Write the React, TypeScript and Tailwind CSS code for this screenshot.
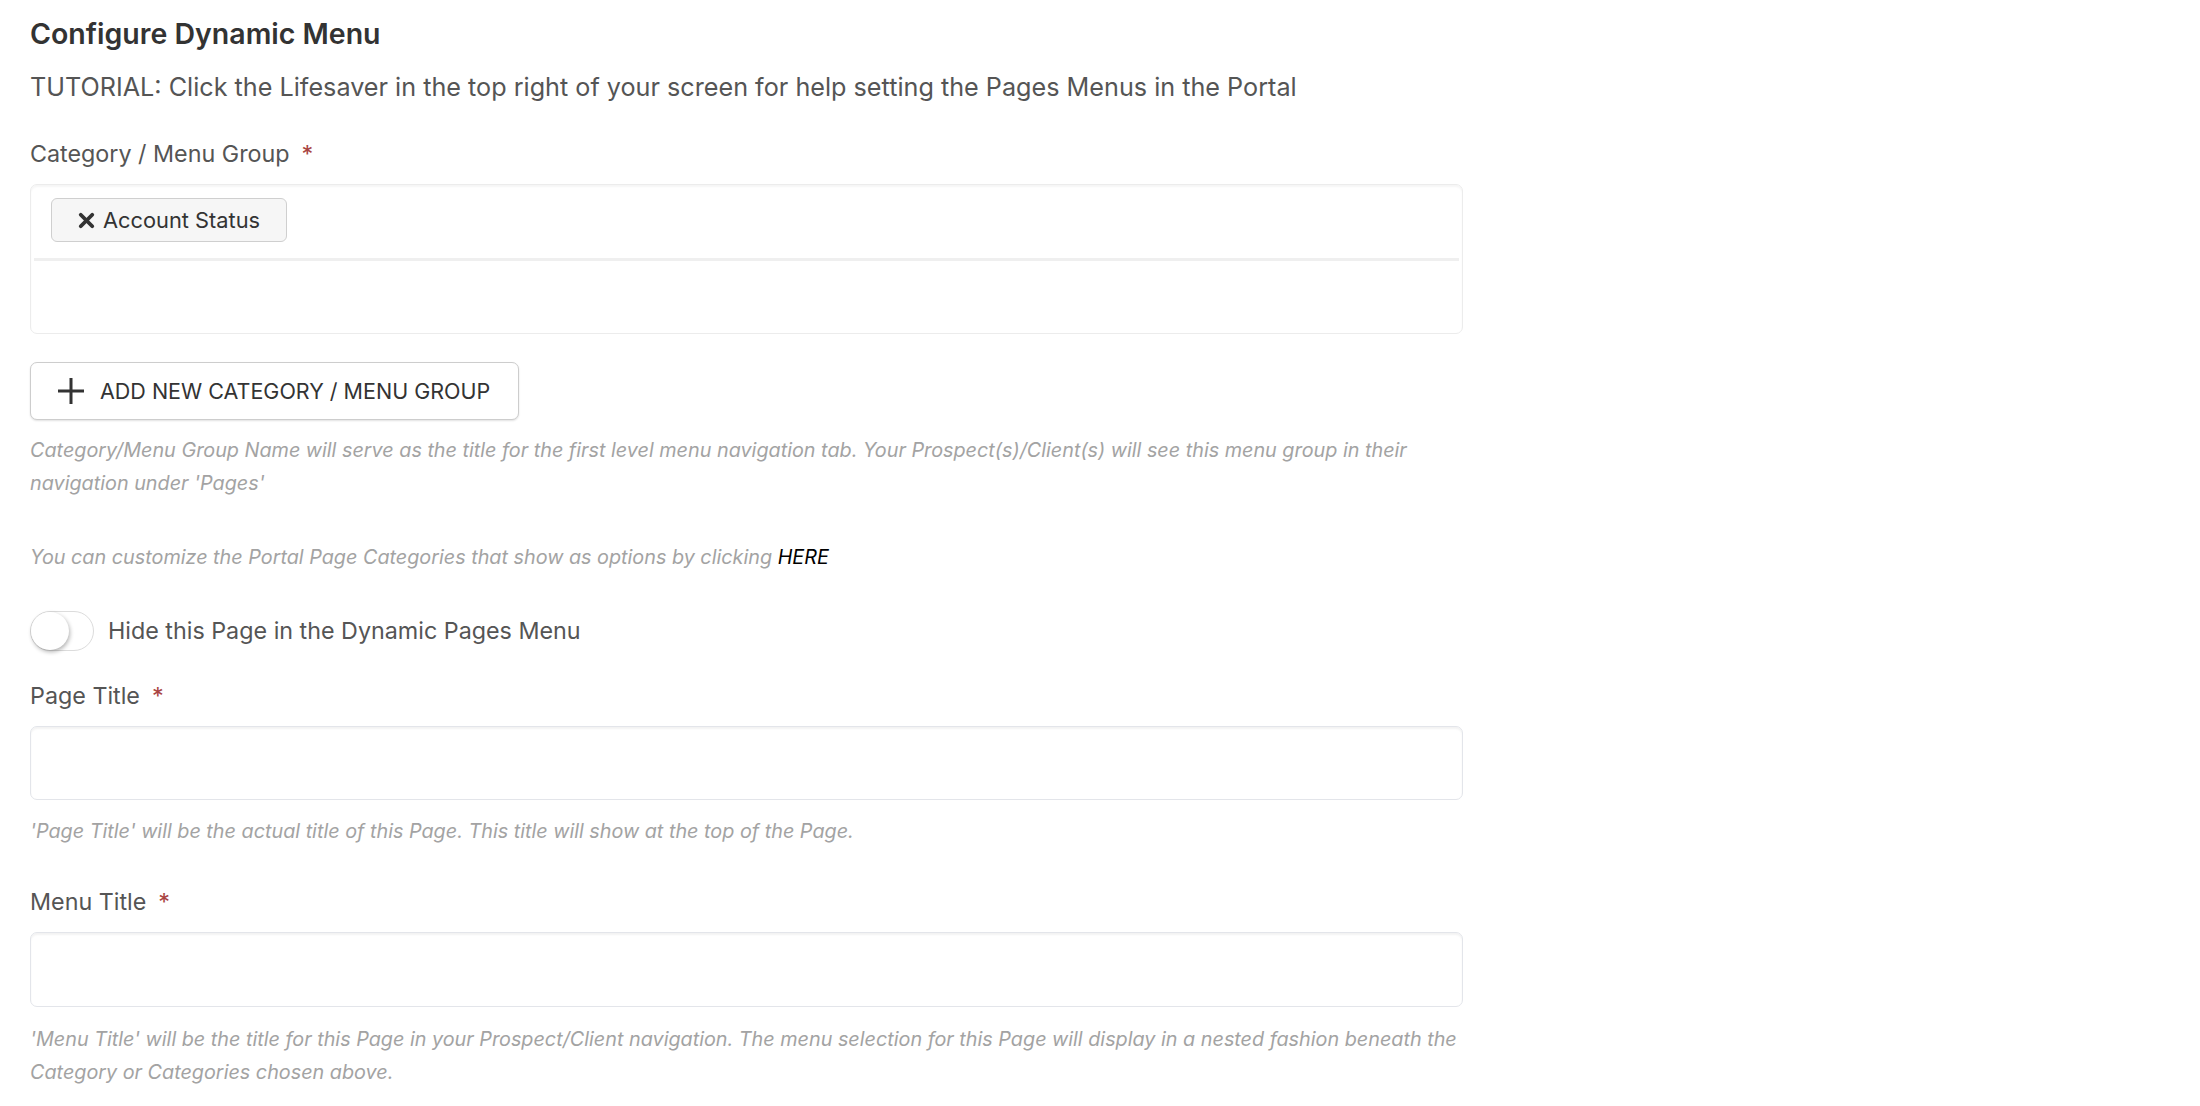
import { X } from "lucide-react";

const FONT = { fontFamily: "Inter, 'Noto Sans', 'Liberation Sans', sans-serif" };

function Req() {
  return <span className="ml-[12px] text-[#a94442]">*</span>;
}

function Help({ children, className = "" }: { children: React.ReactNode; className?: string }) {
  return (
    <p className={`text-[19.8px] leading-[33px] italic text-[#a3a3a3] ${className}`}>{children}</p>
  );
}

function TextInput({ className = "h-[74px]" }: { className?: string }) {
  return (
    <div className={`w-full rounded-[7px] border border-[#e3e5ea] bg-white shadow-[inset_0_2px_2px_rgba(0,0,0,0.05)] ${className}`} />
  );
}

function PlusIcon() {
  return (
    <svg width="28" height="28" viewBox="0 0 28 28" fill="none" stroke="#333" strokeWidth="3">
      <path d="M14 1v26M1 14h26" />
    </svg>
  );
}

export default function App() {
  return (
    <div className="min-h-screen bg-white text-[#555]" style={FONT}>
      <div className="w-[1463px] pl-[30px] pt-[16px]">
        <h1 className="text-[28.5px] leading-[36px] font-semibold text-[#333]">Configure Dynamic Menu</h1>
        <p className="mt-[19px] text-[25.2px] leading-[32px] text-[#555]">
          TUTORIAL: Click the Lifesaver in the top right of your screen for help setting the Pages Menus in the Portal
        </p>

        <label className="mt-[35px] block text-[23.3px] leading-[32px] text-[#555]">
          Category / Menu Group
          <Req />
        </label>
        <div className="mt-[14px] h-[150px] rounded-[7px] border-[1.5px] border-[#ececec] bg-white shadow-[inset_0_2px_2px_rgba(0,0,0,0.04)]">
          <div className="mx-[3px] flex h-[76px] items-start border-b-[3px] border-[#efefef] pl-[17px] pt-[13px]">
            <span className="flex h-[44px] items-center gap-[5px] rounded-[6px] border border-[#cfcfcf] bg-[#f6f6f6] pl-[23px] pr-[26px] text-[21.8px] text-[#333]">
              <X size={23} strokeWidth={4} />
              Account Status
            </span>
          </div>
        </div>

        <button className="mt-[28px] flex h-[58px] items-center gap-[15px] rounded-[7px] border border-[#cdcdcd] bg-white pl-[26px] pr-[28px] text-[21.5px] text-[#333] shadow-[0_1px_2px_rgba(0,0,0,0.12)]">
          <PlusIcon />
          ADD NEW CATEGORY / MENU GROUP
        </button>

        <Help className="mt-[14px]">
          Category/Menu Group Name will serve as the title for the first level menu navigation tab. Your Prospect(s)/Client(s) will see this menu group in their navigation under 'Pages'
        </Help>
        <Help className="mt-[41px]">
          You can customize the Portal Page Categories that show as options by clicking{" "}
          <a className="text-black">HERE</a>
        </Help>

        <div className="mt-[37px] flex items-center gap-[14px]">
          <span className="relative block h-[40px] w-[64px] rounded-full border border-[#dcdcdc] bg-white">
            <span className="absolute left-[0px] top-[0px] h-[38px] w-[38px] rounded-full bg-white shadow-[1px_2px_4px_rgba(0,0,0,0.3)]" />
          </span>
          <span className="text-[23.3px] leading-[32px] text-[#555]">Hide this Page in the Dynamic Pages Menu</span>
        </div>

        <label className="mt-[29px] block text-[23.3px] leading-[32px] text-[#555]">
          Page Title
          <Req />
        </label>
        <div className="mt-[14px]">
          <TextInput />
        </div>
        <Help className="mt-[15px]">
          'Page Title' will be the actual title of this Page. This title will show at the top of the Page.
        </Help>

        <label className="mt-[38px] block text-[23.3px] leading-[32px] text-[#555]">
          Menu Title
          <Req />
        </label>
        <div className="mt-[14px]">
          <TextInput className="h-[75px]" />
        </div>
        <Help className="mt-[16px]">
          'Menu Title' will be the title for this Page in your Prospect/Client navigation. The menu selection for this Page will display in a nested fashion beneath the Category or Categories chosen above.
        </Help>
      </div>
    </div>
  );
}
